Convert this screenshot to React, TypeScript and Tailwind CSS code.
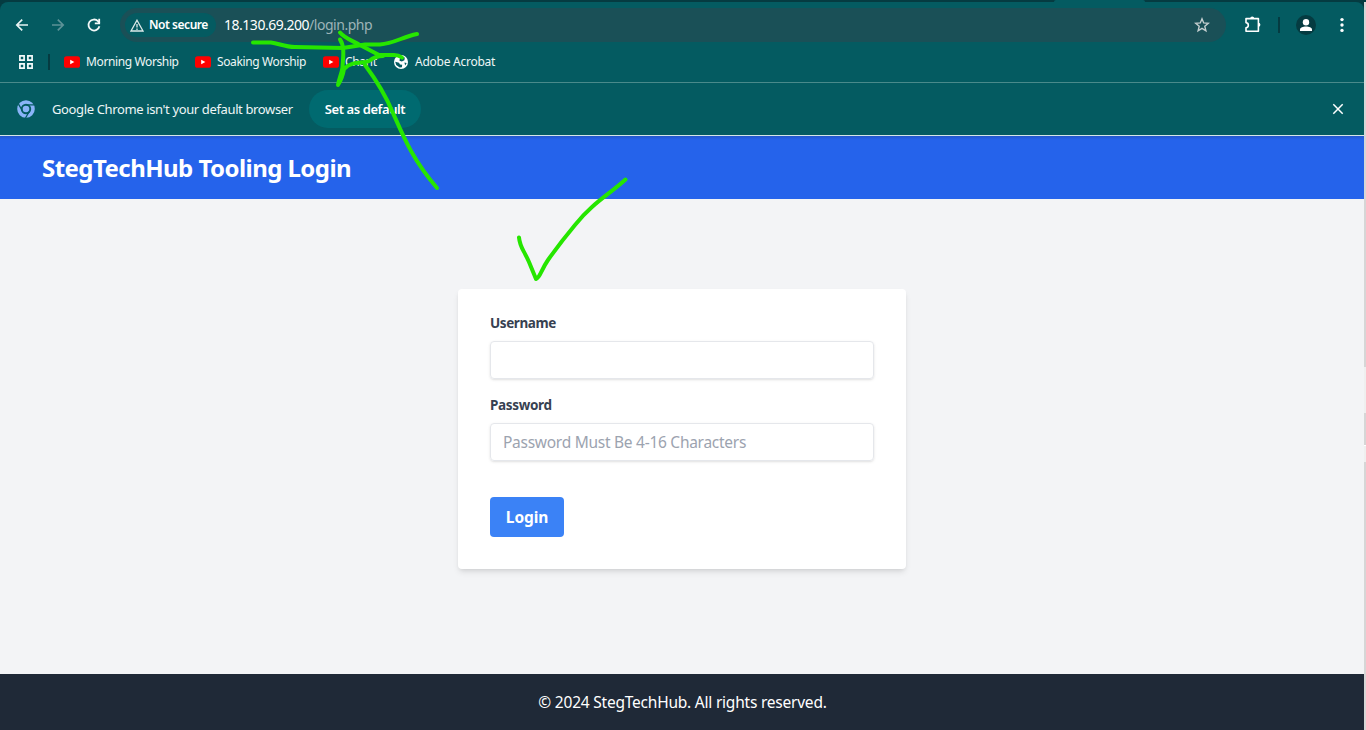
import React from 'react';

const ui = "font-['Noto_Sans','Open_Sans',sans-serif]";

function YouTube() {
  return (
    <svg className="h-3 w-4 shrink-0" viewBox="0 0 16 12">
      <rect y="0.2" width="16" height="11.6" rx="2.6" fill="#f00" />
      <path d="M6.2 3.7v4.6L10.4 6z" fill="#fff" />
    </svg>
  );
}

function Toolbar() {
  return (
    <div className="flex h-[38px] items-center pl-3.5">
      <svg className="h-4 w-4" viewBox="0 0 16 16" fill="none" stroke="#e8f3f3" strokeWidth="1.7">
        <path d="M14 8H3M8.2 2.6L2.8 8l5.4 5.4" />
      </svg>
      <svg className="ml-5 h-4 w-4" viewBox="0 0 16 16" fill="none" stroke="#5c9297" strokeWidth="1.7">
        <path d="M2 8h11M7.8 2.6L13.2 8l-5.4 5.4" />
      </svg>
      <svg className="ml-5 h-4 w-4" viewBox="0 0 16 16" fill="none" stroke="#f2f8f8" strokeWidth="1.8">
        <path d="M13.4 9.2A5.5 5.5 0 1 1 12 4.2L13.6 6" />
        <path d="M13.2 1.8V6.3H8.8" />
      </svg>
      <div className="ml-[18px] flex h-[34px] w-[1106px] items-center rounded-full bg-[#1a5057] pl-[5px] pr-4">
        <div className="flex h-6 w-[91px] items-center rounded-full bg-[#045b61] pl-[5px]">
          <svg className="h-[13px] w-[14px]" viewBox="0 0 14 13" fill="none" stroke="#dce9e9" strokeWidth="1.3">
            <path d="M7 1.2L13 12H1z" />
            <path d="M7 5v3.6M7 9.5v1.4" />
          </svg>
          <span className="ml-[5px] whitespace-nowrap text-[12px] font-semibold tracking-[-0.46px] text-white">Not secure</span>
        </div>
        <span className="ml-2 whitespace-nowrap pb-0.5 text-[14px] tracking-[-0.48px] text-white">
          18.130.69.200<span className="text-[#9db4b7]">/login.php</span>
        </span>
        <svg className="ml-auto h-4 w-4" viewBox="0 0 16 16" fill="none" stroke="#c5cfd0" strokeWidth="1.4">
          <path d="M8 1.8l1.7 4.1 4.6.4-3.5 3 1.1 4.5L8 11.4l-3.9 2.4 1.1-4.5-3.5-3 4.6-.4z" />
        </svg>
      </div>
      <svg className="ml-[18px] h-[18px] w-[18px]" viewBox="0 0 18 18">
        <path d="M2 2.6h12.4v12.6H2v-3.4c3.1-.5 3.1-4.7 0-5.2z" fill="none" stroke="#fff" strokeWidth="1.6" strokeLinejoin="round" />
        <path d="M6.2 2.6a2 2 0 0 1 4 0zM14.4 6.8a2 2 0 0 1 0 4z" fill="#fff" />
      </svg>
      <div className="ml-4 h-4 w-0.5 bg-[#053b41]" />
      <svg className="ml-4 h-5 w-5" viewBox="0 0 20 20">
        <circle cx="10" cy="10" r="10" fill="#053b41" />
        <circle cx="10" cy="7.2" r="3.2" fill="#fff" />
        <path d="M4 16v-1.6c0-2 3-3 6-3s6 1 6 3V16z" fill="#fff" />
      </svg>
      <svg className="ml-[18px] h-4 w-4" viewBox="0 0 16 16" fill="#fff">
        <circle cx="8" cy="2.6" r="1.7" />
        <circle cx="8" cy="8" r="1.7" />
        <circle cx="8" cy="13.4" r="1.7" />
      </svg>
    </div>
  );
}

function Bookmarks() {
  return (
    <div className="flex h-[39px] items-center border-b border-[#4a8a8b] pb-[3px] pl-[18px] text-[12px] tracking-[-0.38px] text-[#eef6f6]">
      <svg className="h-4 w-4" viewBox="0 0 16 16" fill="none" stroke="#f4fafa" strokeWidth="1.7">
        <path d="M1.9 1.9h4.2v4.2H1.9zM9.9 1.9h4.2v4.2H9.9zM1.9 9.9h4.2v4.2H1.9zM9.9 9.9h4.2v4.2H9.9z" />
      </svg>
      <div className="ml-3.5 mr-3.5 h-4 w-0.5 bg-[#053b41]" />
      <div className="flex w-[131px] items-center gap-1.5 whitespace-nowrap">
        <YouTube /><span>Morning Worship</span>
      </div>
      <div className="flex w-32 items-center gap-1.5 whitespace-nowrap">
        <YouTube /><span>Soaking Worship</span>
      </div>
      <div className="flex w-[70px] items-center gap-1.5 whitespace-nowrap">
        <YouTube /><span>Chant</span>
      </div>
      <div className="flex items-center gap-1.5 whitespace-nowrap tracking-[-0.25px]">
        <svg className="h-4 w-4" viewBox="0 0 16 16">
          <circle cx="8" cy="8" r="7" fill="#fff" />
          <path d="M7.6 2.6l4.2.8-.4 2.8-2.600 1.400-2.300-.8.3-2zM2.200 7.800l3.800 1 1 1.800 2.200.1-.3 2.500-2.200.2L3.200 11zM11.400 8.600l2.300.3-1.500 2.700z" fill="#045b61" />
        </svg>
        <span>Adobe Acrobat</span>
      </div>
    </div>
  );
}

function DefaultBrowserBar() {
  return (
    <div className="flex h-[53px] items-center border-b border-[#d5e6e6] pl-[17px] pr-5">
      <svg className="h-[18px] w-[18px]" viewBox="0 0 18 18" fill="none">
        <circle cx="9" cy="9" r="7" stroke="#8ab4f8" strokeWidth="3.6" />
        <circle cx="9" cy="9" r="3.3" fill="#8ab4f8" />
        <path d="M9 4.9h8M5.5 11L1.5 4.2M12.5 11L8.5 18" stroke="#045b61" strokeWidth="1.3" />
      </svg>
      <span className="ml-[17px] w-[257px] whitespace-nowrap pt-0.5 text-[13px] tracking-[-0.37px] text-[#eef6f6]">Google Chrome isn't your default browser</span>
      <button className="flex h-[38px] w-28 items-center justify-center whitespace-nowrap rounded-full bg-[#006a70] pt-0.5 text-[13px] font-semibold tracking-[-0.42px] text-white">Set as default</button>
      <svg className="ml-auto h-3 w-3" viewBox="0 0 12 12" stroke="#fff" strokeWidth="1.5">
        <path d="M1.3 1.3l9.4 9.4M10.7 1.3l-9.4 9.4" />
      </svg>
    </div>
  );
}

function LoginForm() {
  return (
    <form className="flex h-[280px] w-[448px] flex-col items-start rounded bg-white px-8 pt-6 shadow-md">
      <label className="h-5 text-[13.5px] font-bold leading-5 tracking-[-0.4px] text-[#374151]">Username</label>
      <input className="mt-2 h-[38px] w-full rounded border border-[#e5e7eb] px-3 shadow-sm" />
      <label className="mt-4 h-5 text-[13.5px] font-bold leading-5 tracking-[-0.33px] text-[#374151]">Password</label>
      <input placeholder="Password Must Be 4-16 Characters" className="mt-2 h-[38px] w-full rounded border border-[#e5e7eb] px-3 text-[15.5px] tracking-[-0.27px] shadow-sm placeholder:text-[#9ca3af]" />
      <button className="mt-9 h-10 w-[74px] rounded bg-[#3b82f6] pt-0.5 text-[15.5px] font-bold tracking-[-0.1px] text-white">Login</button>
    </form>
  );
}

function Ink() {
  return (
    <svg className="pointer-events-none absolute left-0 top-0 h-[300px] w-[700px]" viewBox="0 0 700 300" fill="none" stroke="#26e600" strokeWidth="4" strokeLinecap="round" strokeLinejoin="round">
      <path d="M253 42.5h18c8 1 14 4.5 24 4.5l48 1 22-3.5h15c14-1 22-7.5 37-10.5" />
      <path d="M340 32.5c5 6 12 8 19 12l20 10.500h15c4 0 6 1 8 2.500" />
      <path d="M340 39.5c5 7 3 18 2.5 28-1 7-3.5 11-4.500 17.500 4-6 5-10 6-16 9-9 19-5 25-8 5-4 9-5 14-5" />
      <path d="M365 65Q383 89 393 113C404 138 413 160 437 188" />
      <path d="M519 237.5c1 10 4 11 10 24.500l7 17c4-1 5-9 12-19Q560 243 575 225Q583 215 592 207C603 197 614 190 625.500 179.500" />
    </svg>
  );
}

export default function App() {
  return (
    <div className={`relative flex h-[730px] w-[1366px] flex-col overflow-hidden bg-[#f3f4f6] ${ui}`}>
      <header className="bg-[#053b41]">
        <div className="flex h-0.5 pl-[1054px]">
          <div className="h-0.5 w-[91px] rounded-t bg-[#045b61]" />
        </div>
        <div className="flex bg-[#d6d6d6]">
          <div className="w-[1364px] bg-[#053b41]">
            <div className="rounded-t-lg bg-[#045b61] pt-1">
              <Toolbar />
              <Bookmarks />
              <DefaultBrowserBar />
            </div>
          </div>
        </div>
      </header>
      <div className="flex min-h-0 flex-1">
        <div className="flex w-[1364px] flex-col">
          <div className="flex h-[63px] items-center bg-[#2563eb] bg-linear-to-b from-[#2257cc] to-[#2563eb] to-[4px] pl-[42px]">
            <h1 className="whitespace-nowrap text-[24px] font-bold tracking-[-0.55px] text-white">StegTechHub Tooling Login</h1>
          </div>
          <main className="flex flex-1 items-start justify-center pt-[90px]">
            <LoginForm />
          </main>
          <footer className="flex h-14 items-center justify-center bg-[#1f2937] pl-px pt-0.5 text-[15.5px] text-white">
            <span className="whitespace-nowrap tracking-[-0.22px]">© 2024 StegTechHub. All rights reserved.</span>
          </footer>
        </div>
        <div className="flex w-0.5 flex-col bg-[#efefef]">
          <div className="h-[231px] bg-[#d6d6d6]" />
          <div className="mt-[46px] h-8 bg-[#d6d6d6]" />
          <div className="h-px bg-white" />
          <div className="mt-4 flex-1 bg-[#d6d6d6]" />
        </div>
      </div>
      <Ink />
    </div>
  );
}
